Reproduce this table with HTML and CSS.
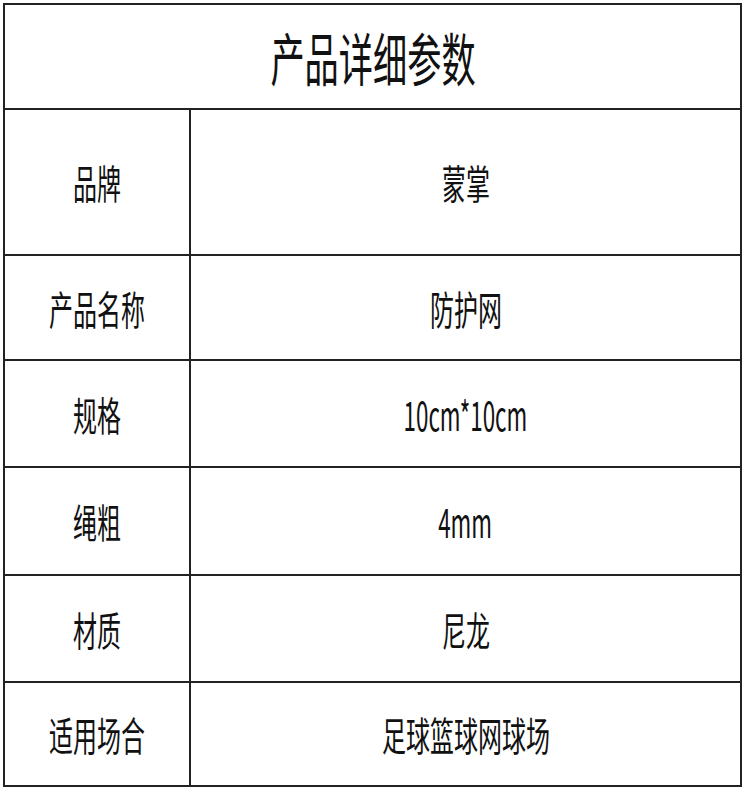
FILE: index.html
```html
<!DOCTYPE html>
<html lang="zh-CN">
<head>
<meta charset="utf-8">
<title>产品详细参数</title>
<link rel="stylesheet" href="styles.css">
</head>
<body>
<div class="sheet">
  <div class="title"><span class="txt txt-title">产品详细参数</span></div>
  <div class="cell label r1"><span class="txt">品牌</span></div>
  <div class="cell value r1"><span class="txt">蒙掌</span></div>
  <div class="cell label r2"><span class="txt">产品名称</span></div>
  <div class="cell value r2"><span class="txt">防护网</span></div>
  <div class="cell label r3"><span class="txt">规格</span></div>
  <div class="cell value r3"><span class="txt latin">10cm*10cm</span></div>
  <div class="cell label r4"><span class="txt">绳粗</span></div>
  <div class="cell value r4"><span class="txt latin">4mm</span></div>
  <div class="cell label r5"><span class="txt">材质</span></div>
  <div class="cell value r5"><span class="txt">尼龙</span></div>
  <div class="cell label r6"><span class="txt">适用场合</span></div>
  <div class="cell value r6"><span class="txt">足球篮球网球场</span></div>
</div>
</body>
</html>
```
FILE: styles.css
```css
html, body {
  margin: 0;
  padding: 0;
  background: #ffffff;
}
body {
  font-family: "Noto Sans CJK SC", "Noto Sans", sans-serif;
  color: #111111;
}
.sheet {
  margin: 3px 0 0 3px;
  width: 739px;
  box-sizing: border-box;
  border-top: 2px solid #222222;
  border-left: 2px solid #222222;
  display: grid;
  grid-template-columns: 186px 551px;
  grid-template-rows: 105px 146px 105px 107px 108px 107px 104px;
}
.title, .cell {
  box-sizing: border-box;
  border-right: 2px solid #222222;
  border-bottom: 2px solid #222222;
  display: flex;
  align-items: center;
  justify-content: center;
  overflow: hidden;
}
.title {
  grid-column: 1 / 3;
}
.txt {
  display: inline-block;
  font-size: 40px;
  line-height: 1;
  white-space: nowrap;
  transform: scaleX(0.6);
}
.txt.latin {
  transform: scaleX(0.56);
}
.txt-title {
  font-size: 57px;
  transform: scaleX(0.6);
}
```
